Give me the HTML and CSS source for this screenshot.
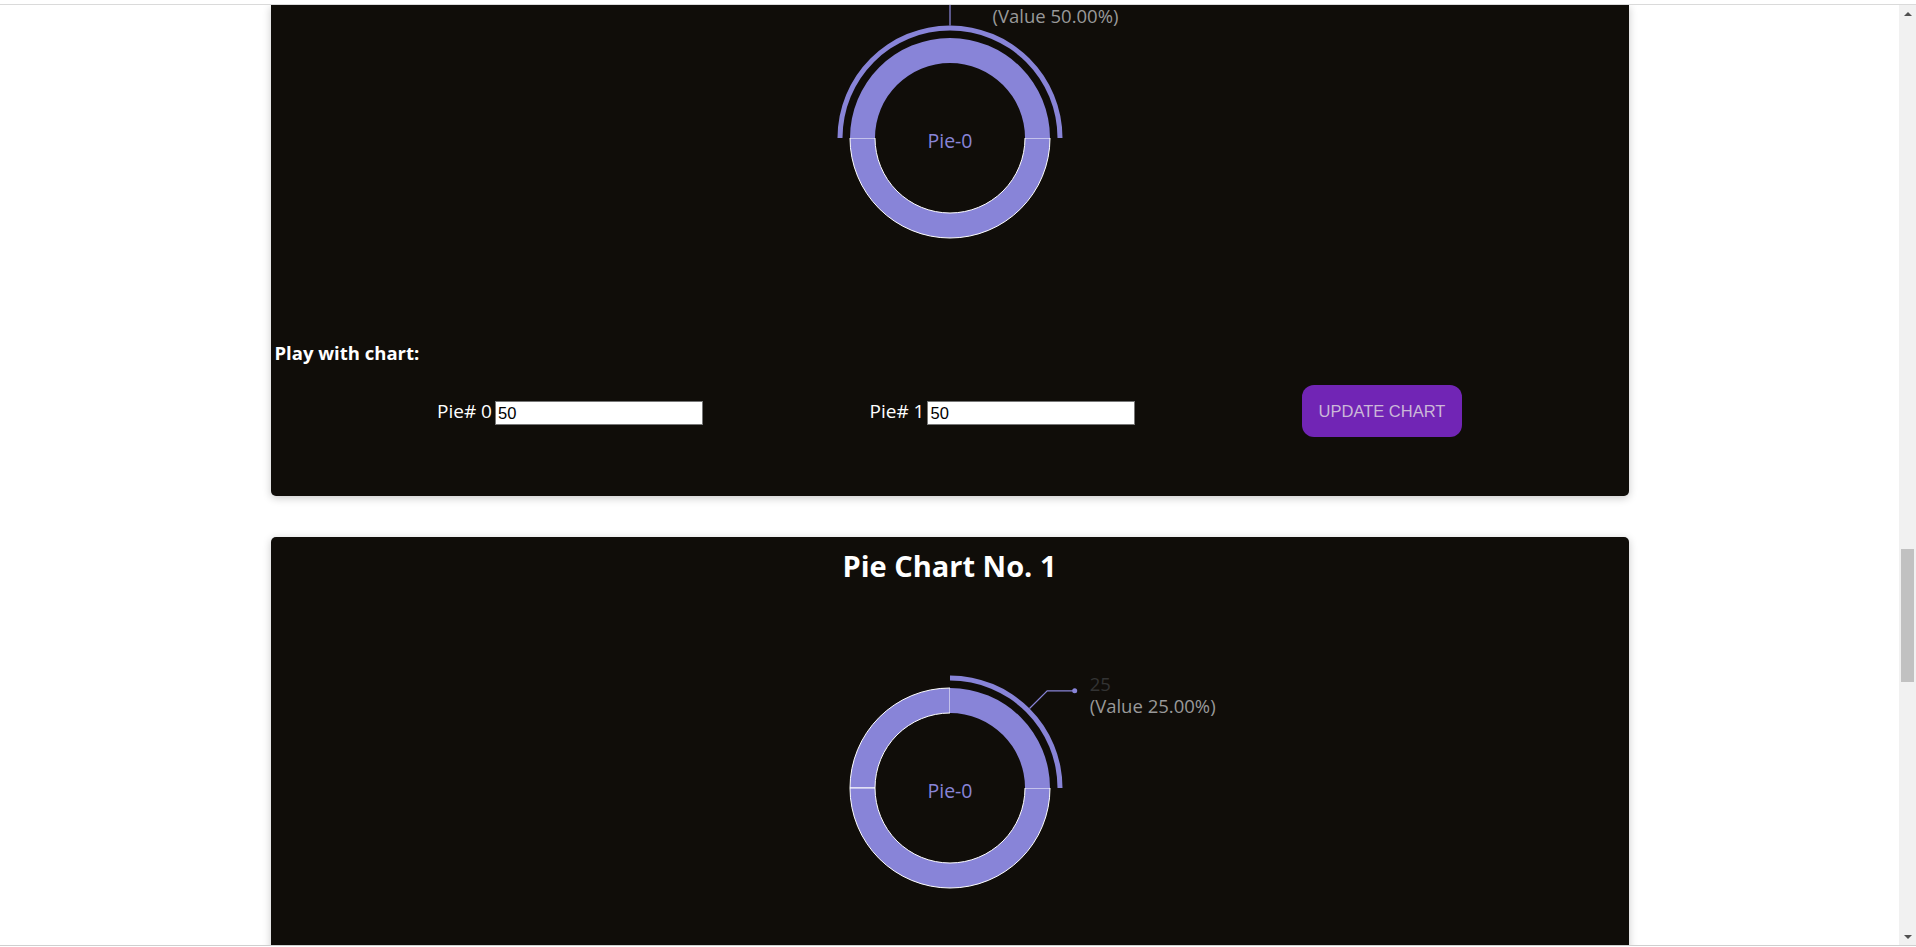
FILE: index.html
```html
<!DOCTYPE html>
<html>
<head>
<meta charset="utf-8">
<title>Pie Charts</title>
<link rel="stylesheet" href="styles.css">
</head>
<body>
<div class="frame">
  <main class="viewport">
    <section class="card card-cut">
      <svg class="chart" width="1358" height="333" viewBox="0 0 1358 333">
        <path class="sector" d="M579 133 A100 100 0 0 0 779 133 L754 133 A75 75 0 0 1 604 133 Z"/>
        <path class="active" d="M779 133 A100 100 0 0 0 579 133 L604 133 A75 75 0 0 1 754 133 Z"/>
        <path class="active" d="M791.5 133 A112.5 112.5 0 0 0 566.5 133 L571.5 133 A107.5 107.5 0 0 1 786.5 133 Z"/>
        <path class="leader" d="M679 20.5 L679 -4.5 L706.5 -4.5"/>
        <text class="pct" x="721.5" y="18">(Value 50.00%)</text>
        <text class="center-label" x="679" y="143" text-anchor="middle">Pie-0</text>
      </svg>
      <h4 class="play-title">Play with chart:</h4>
      <div class="controls">
        <label class="field"><span class="field-label">Pie# 0</span><input class="field-input" type="text" value="50"></label>
        <label class="field"><span class="field-label">Pie# 1</span><input class="field-input" type="text" value="50"></label>
        <button class="update-btn" type="button">UPDATE CHART</button>
      </div>
    </section>
    <section class="card card-full">
      <h2 class="card-title">Pie Chart No. 1</h2>
      <svg class="chart chart-full" width="1358" height="400" viewBox="0 0 1358 400">
        <path class="sector" d="M679 100 A100 100 0 0 0 579 200 L604 200 A75 75 0 0 1 679 125 Z"/>
        <path class="sector" d="M579 200 A100 100 0 0 0 779 200 L754 200 A75 75 0 0 1 604 200 Z"/>
        <path class="active" d="M779 200 A100 100 0 0 0 679 100 L679 125 A75 75 0 0 1 754 200 Z"/>
        <path class="active" d="M791.5 200 A112.5 112.5 0 0 0 679 87.5 L679 92.5 A107.5 107.5 0 0 1 786.5 200 Z"/>
        <path class="leader" d="M758.5 120.5 L776.2 102.8 L803.7 102.8"/>
        <circle class="dot" cx="803.7" cy="102.8" r="2.5"/>
        <text class="val" x="818.7" y="102.8">25</text>
        <text class="pct" x="818.7" y="125.3">(Value 25.00%)</text>
        <text class="center-label" x="679" y="210" text-anchor="middle">Pie-0</text>
      </svg>
    </section>
  </main>
  <div class="scrollbar">
    <div class="sb-btn"><span class="sb-arrow-up"></span></div>
    <div class="sb-track"><div class="sb-thumb"></div></div>
    <div class="sb-btn"><span class="sb-arrow-down"></span></div>
  </div>
</div>
</body>
</html>
```

FILE: styles.css
```css
html, body {
  margin: 0;
  padding: 0;
  height: 947px;
  overflow: hidden;
  background: #ffffff;
  font-family: "Open Sans", "Noto Sans", sans-serif;
}

.frame {
  margin-top: 4px;
  height: 940px;
  border-top: 1px solid #dadada;
  border-bottom: 1px solid #cfcfcf;
  display: flex;
}

.viewport {
  flex: 1;
  overflow: hidden;
  display: flex;
  flex-direction: column;
  gap: 41px;
}

.card {
  flex: none;
  width: 1358px;
  margin: 0 auto;
  background: #100d09;
  border-radius: 5px;
  box-shadow: 0 2px 8px rgba(0, 0, 0, 0.22);
  color: #ffffff;
}

.card-cut {
  border-top-left-radius: 0;
  border-top-right-radius: 0;
  padding-bottom: 59px;
}

.card-full {
  padding-top: 9px;
}

.card-title {
  margin: 0;
  text-align: center;
  font-size: 29px;
  line-height: 40px;
  font-weight: 700;
  color: #ffffff;
}

.chart {
  display: block;
}

.chart-full {
  margin-top: 2px;
}

.sector {
  fill: #8884d8;
  stroke: #ffffff;
  stroke-width: 1;
}

.active {
  fill: #8884d8;
}

.leader {
  fill: none;
  stroke: #8884d8;
  stroke-width: 1.25;
}

.dot {
  fill: #8884d8;
}

.chart text {
  font-family: "Open Sans", "Noto Sans", sans-serif;
  font-size: 18.5px;
}

.val {
  fill: #333333;
}

.pct {
  fill: #999999;
}

.chart .center-label {
  fill: #8884d8;
  font-size: 19.5px;
}

.play-title {
  margin: 0;
  padding: 2px 0 0 4px;
  font-size: 18.5px;
  line-height: 25px;
  font-weight: 700;
}

.controls {
  margin-top: 20px;
  height: 52px;
  display: flex;
  align-items: center;
  justify-content: space-evenly;
}

.field {
  display: flex;
  align-items: center;
  gap: 3px;
}

.field-label {
  font-size: 19px;
  color: #ffffff;
}

.field-input {
  box-sizing: border-box;
  width: 208px;
  height: 24px;
  margin: 4px 0 0 0;
  padding: 1px 2px;
  border: 1px solid #767676;
  background: #ffffff;
  color: #000000;
  font-family: "Liberation Sans", Arial, sans-serif;
  font-size: 16.5px;
  outline: none;
}

.update-btn {
  box-sizing: border-box;
  width: 160px;
  height: 52px;
  padding: 0;
  border: none;
  border-radius: 12px;
  background: #7125b5;
  color: #cbb8d8;
  font-family: "Liberation Sans", Arial, sans-serif;
  font-size: 16.5px;
  letter-spacing: 0;
  cursor: pointer;
}

.scrollbar {
  flex: none;
  width: 17px;
  background: #f1f1f1;
  display: flex;
  flex-direction: column;
}

.sb-btn {
  height: 17px;
  display: flex;
  align-items: center;
  justify-content: center;
}

.sb-arrow-up {
  width: 0;
  height: 0;
  border-left: 4.5px solid transparent;
  border-right: 4.5px solid transparent;
  border-bottom: 4.5px solid #505050;
}

.sb-arrow-down {
  width: 0;
  height: 0;
  border-left: 4.5px solid transparent;
  border-right: 4.5px solid transparent;
  border-top: 4.5px solid #505050;
}

.sb-track {
  flex: 1;
}

.sb-thumb {
  margin: 527px 2px 0 2px;
  height: 133px;
  background: #c1c1c1;
}
```
